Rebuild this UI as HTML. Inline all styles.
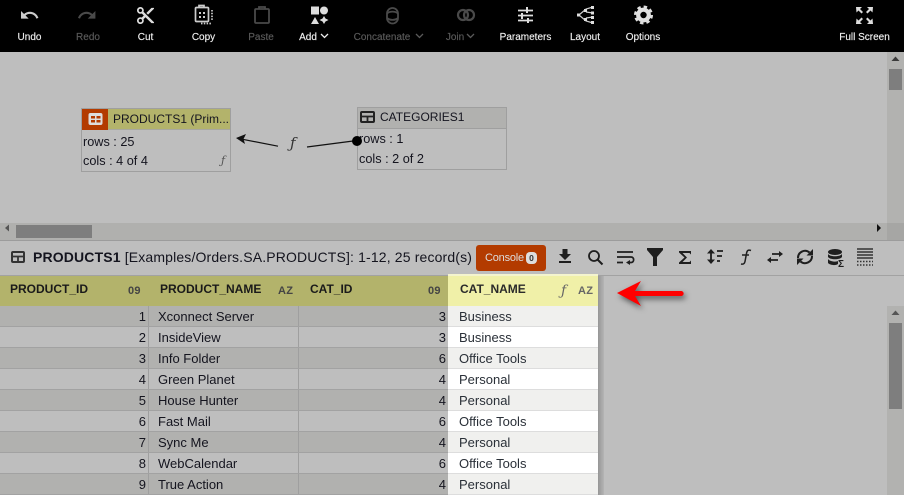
<!DOCTYPE html>
<html><head><meta charset="utf-8"><style>
html,body{margin:0;padding:0;width:904px;height:495px;overflow:hidden;background:#bebebe;font-family:"Liberation Sans",sans-serif;color:#1c1c1c}
div,span,svg{position:absolute;box-sizing:border-box;white-space:nowrap}
.tb{top:30.500px;height:13px;font-size:10px;line-height:13px;color:#eee;text-align:center;transform:translateX(-50%);-webkit-text-stroke:.15px #eee}
.dim{color:#5a5a5a;-webkit-text-stroke:.15px #5a5a5a}
.cell{height:20px;font-size:13px;line-height:20px;margin-top:1px;color:#14141e}
.num{text-align:right}
.hd{top:281px;font-size:12px;font-weight:bold;line-height:16px;color:#1a1a1a}
.ty{top:284px;font-size:11px;font-weight:bold;line-height:14px;color:#444;letter-spacing:.3px}
.n{font-size:12.7px;line-height:18px;color:#14141e}
.s{left:0;width:448px;height:20px;background:#b1b1af}
.w{left:448px;width:150px;height:20px;background:#fff}
.l{left:0;width:448px;height:1px;background:#a2a2a2}
.m{left:448px;width:150px;height:1px;background:#ddd}
.c{left:459px;color:#2a3038}
.a{left:0;width:146px}.b{left:158px}.d{left:299px;width:147px}
</style></head><body>
<div style="left:0;top:0;width:904px;height:52px;background:#000"></div>
<svg style="left:0;top:0" width="904" height="30" viewBox="0 0 904 30" fill="none">
<path transform="translate(19.300 5) scale(.85)" d="M12.500 8c-2.650 0-5.050.99-6.900 2.600L2 7v9h9l-3.620-3.620c1.390-1.160 3.160-1.880 5.120-1.880 3.540 0 6.550 2.310 7.600 5.500l2.370-.78C21.080 11.030 17.150 8 12.500 8z" fill="#ccc"/>
<path transform="translate(76.700 5) scale(.85)" d="M18.400 10.600C16.550 8.990 14.150 8 11.500 8c-4.650 0-8.580 3.030-9.960 7.220L3.900 16c1.050-3.190 4.050-5.500 7.600-5.500 1.950 0 3.730.72 5.120 1.880L13 16h9V7l-3.600 3.600z" fill="#4a4a4a"/>
<path transform="translate(135.300 5.300) scale(.85)" d="M9.640 7.640c.23-.5.36-1.050.36-1.640 0-2.210-1.790-4-4-4S2 3.790 2 6s1.790 4 4 4c.59 0 1.140-.13 1.640-.36L10 12l-2.360 2.360C7.140 14.130 6.590 14 6 14c-2.210 0-4 1.790-4 4s1.790 4 4 4 4-1.790 4-4c0-.59-.13-1.140-.36-1.640L12 14l7 7h3v-1L9.640 7.640zM6 8c-1.100 0-2-.89-2-2s.9-2 2-2 2 .89 2 2-.9 2-2 2zm0 12c-1.100 0-2-.89-2-2s.9-2 2-2 2 .89 2 2-.9 2-2 2zM19 3l-6 6 2 2 7-7V3z" fill="#ddd"/>
<g stroke="#ccc" stroke-width="1.700"><rect x="195.500" y="7.500" width="13" height="14" rx="1"/><path d="M199 7V5.500h5V7"/><path d="M212 10v11M201 23.500h11" stroke-dasharray="1.500 1.300"/></g><path d="M199 12h2v2h-2zM203 12h2v2h-2zM203 16h2v2h-2zM199 16h2v2h-2z" fill="#ccc"/>
<g stroke="#4a4a4a" stroke-width="1.800"><rect x="255" y="9" width="14" height="14" rx="1"/><path d="M259 9V7h6v2"/></g>
<path d="M311 6.500h8v8h-8z" fill="#ddd"/><circle cx="324" cy="10.500" r="4" fill="#ddd"/><path d="M315 17l4 7h-8zM324 16l1.500 2.500L328.500 20l-3 1.500L324 24l-1.500-2.500-3-1.500 3-1.500z" fill="#ddd"/>
<g stroke="#4a4a4a" stroke-width="1.800"><rect x="387" y="8" width="11" height="15.500" rx="5.500"/><path d="M387 13.500c3-2.500 8-2.500 11 0M387 18c3 2.500 8 2.500 11 0"/></g>
<g stroke="#4a4a4a" stroke-width="2.200"><circle cx="463" cy="15" r="5"/><circle cx="469" cy="15" r="5"/></g>
<g stroke="#ddd" stroke-width="1.700"><path d="M518 10.500h15M518 15.500h15M518 20.500h15"/></g><path d="M527 7v6M522 13v6M528 18v5" stroke="#ddd" stroke-width="2"/>
<g stroke="#ccc" stroke-width="1.200"><path d="M579 15l7-6 7-2M579 15l7 6 7 2M586 12l7 1M586 18l7-1"/></g><path d="M577 13.500h3v3h-3zM584 9h3v3h-3zM584 18h3v3h-3zM591 6h3v3h-3zM591 11.500h3v3h-3zM591 16h3v3h-3zM591 21h3v3h-3z" fill="#ddd"/>
<circle cx="643.500" cy="15" r="5.300" stroke="#e0e0e0" stroke-width="4.200"/><circle cx="643.500" cy="15" r="8.300" stroke="#e0e0e0" stroke-width="2.400" stroke-dasharray="3.500 3"/>
<path d="M856 7h6l-2 2 3 3-1.500 1.500-3-3-2 2zM873 7h-6l2 2-3 3 1.500 1.500 3-3 2 2zM856 24h6l-2-2 3-3-1.500-1.500-3 3-2-2zM873 24h-6l2-2-3-3 1.500-1.500 3 3 2-2z" fill="#ddd"/>
</svg>
<div class="tb" style="left:29.500px">Undo</div><div class="tb dim" style="left:88px">Redo</div><div class="tb" style="left:145.500px">Cut</div><div class="tb" style="left:203.500px">Copy</div><div class="tb dim" style="left:261px">Paste</div><div class="tb" style="left:308px">Add</div>
<div class="tb dim" style="left:382px">Concatenate</div><div class="tb dim" style="left:455px">Join</div><div class="tb" style="left:525.500px">Parameters</div><div class="tb" style="left:585px">Layout</div><div class="tb" style="left:643px">Options</div><div class="tb" style="left:864.500px">Full Screen</div>
<svg style="left:0;top:30px" width="904" height="13" fill="none"><path d="M321 4l3.500 3.500L328 4" stroke="#eee" stroke-width="1.300"/><path d="M416 4l3.500 3.500L423 4M467 4l3.500 3.500L474 4" stroke="#5a5a5a" stroke-width="1.300"/></svg>

<!-- scrollbars of canvas -->
<div style="left:887px;top:52px;width:17px;height:171px;background:#b2b2b0"></div>
<div style="left:889px;top:69px;width:13px;height:21px;background:#7e7e7e"></div>
<div style="left:0;top:223px;width:904px;height:17px;background:#b0b0ae"></div>
<div style="left:887px;top:223px;width:17px;height:17px;background:#a6a6a4"></div>
<div style="left:16px;top:225px;width:76px;height:13px;background:#7e7e7e"></div>
<svg style="left:0;top:52px" width="904" height="190" fill="none"><path d="M891.500 9l4-4.500 4 4.500z" fill="#3a3a3a"/><path d="M5 176l4-3.500v7z" fill="#555"/><path d="M877 172v8l4-4z" fill="#111"/></svg>
<div style="left:0;top:240px;width:904px;height:1px;background:#9c9c9c"></div>

<!-- nodes -->
<div style="left:81px;top:108px;width:150px;height:64px;border:1px solid #9f9f9f;background:#bebebe"></div>
<div style="left:82px;top:109px;width:148px;height:21px;background:#b3b36b;border-bottom:1px solid #a8a8a0"></div>
<div style="left:82px;top:109px;width:26px;height:21px;background:#b33b00"></div>
<svg style="left:88px;top:112px" width="15" height="14"><rect x=".5" y="1" width="14" height="12" rx="2" fill="#ddd"/><path d="M3 4h4v2.500H3zM8.500 4h4v2.500h-4zM3 8h4v2.500H3zM8.500 8h4v2.500h-4z" fill="#b33b00"/></svg>
<div style="left:113px;top:111px;font-size:12px;line-height:17px;color:#14141e;width:116px">PRODUCTS1 (Prim...</div>
<div class="n" style="left:83px;top:133px">rows : 25</div>
<div class="n" style="left:83px;top:152px">cols : 4 of 4</div>
<div style="left:221px;top:153px;font:italic 11px/15px 'DejaVu Serif',serif;color:#555">ƒ</div>

<div style="left:357px;top:107px;width:150px;height:63px;border:1px solid #9f9f9f"></div>
<div style="left:358px;top:108px;width:148px;height:21px;background:#b1b1af;border-bottom:1px solid #9f9f9f"></div>
<svg style="left:360px;top:111px" width="15" height="13"><rect x="1" y="1" width="13" height="10" rx="1" stroke="#222" stroke-width="2" fill="none"/><path d="M1 5.500h13M7.500 5v6" stroke="#222" stroke-width="1.800"/></svg>
<div style="left:380px;top:109px;font-size:12px;line-height:17px;color:#14141e">CATEGORIES1</div>
<div class="n" style="left:359px;top:130px">rows : 1</div>
<div class="n" style="left:359px;top:150px">cols : 2 of 2</div>
<svg style="left:230px;top:125px" width="135" height="30" fill="none"><path d="M12 14.200l36 7" stroke="#111" stroke-width="1.200"/><path d="M6 13l10-4-2.500 5 1.500 5z" fill="#111"/><path d="M77 22l50-6.500" stroke="#111" stroke-width="1.200"/><circle cx="127" cy="16" r="5" fill="#000"/></svg>
<div style="left:290px;top:133px;font:italic 15px/20px 'DejaVu Serif',serif;color:#333">ƒ</div>

<!-- title row -->
<svg style="left:10px;top:250px" width="16" height="14"><rect x="2" y="2" width="12" height="10" rx="1" stroke="#333" stroke-width="2" fill="none"/><path d="M2 6.500h12M8 6v6" stroke="#333" stroke-width="1.800"/></svg>
<div style="left:33px;top:248px;font-size:14px;line-height:18px;color:#14141e;letter-spacing:.15px"><b>PRODUCTS1</b> [Examples/Orders.SA.PRODUCTS]: 1-12, 25 record(s)</div>
<div style="left:476px;top:245px;width:70px;height:26px;background:#b33b00;border-radius:3px"></div>
<div style="left:485px;top:251px;font-size:11px;line-height:15px;color:#ddd;letter-spacing:-.2px">Console</div>
<div style="left:526px;top:252px;width:11px;height:12px;border-radius:4px;background:#ddd;color:#333;font-size:8.500px;font-weight:bold;line-height:12px;text-align:center">0</div>
<svg style="left:550px;top:243px" width="330" height="30" fill="none">
<path d="M12.500 6h5v5h3.500l-6 6-6-6h3.500zM9 18h12v2H9z" fill="#1e1e1e"/>
<circle cx="44" cy="13" r="5" stroke="#1e1e1e" stroke-width="1.800"/><path d="M47.500 16.500l5 5" stroke="#1e1e1e" stroke-width="2"/>
<path d="M67 9h16M67 14h14c3.500 0 3.500 5.500 0 5.500h-3M67 19.500h6" stroke="#1e1e1e" stroke-width="1.700"/><path d="M80 17l-4 2.500 4 2.500z" fill="#1e1e1e"/>
<path d="M97 5h16v2l-6 7v9h-4v-9l-6-7z" fill="#1e1e1e"/>
<path d="M129 8h12v3.500L139.500 10h-7l4.500 4.500-4.500 4.500h7l1.500-1.500V21h-12v-1.500l5.500-5-5.500-5z" fill="#1e1e1e"/>
<path d="M161 9v9" stroke="#1e1e1e" stroke-width="1.800"/><path d="M161 6l-4 4.500h8zM161 21l-4-4.500h8z" fill="#1e1e1e"/><path d="M167 8h6M167 13h5M167 18h3" stroke="#1e1e1e" stroke-width="1.800"/>
<path d="M201 7.500c-3-1-4 0-4.500 3l-1.500 8c-.5 2.500-2 3-4 2.500M192 12h7" stroke="#1e1e1e" stroke-width="1.500"/>
<path d="M222 11h8M220 17h8" stroke="#1e1e1e" stroke-width="1.800"/><path d="M233 11l-4-3v6zM217 17l4-3v6z" fill="#1e1e1e"/>
<path d="M248 15a7 7 0 0 1 11.500-5.500M262 13a7 7 0 0 1-11.500 5.500" stroke="#1e1e1e" stroke-width="2"/><path d="M263 6v6.500h-6.500zM247 22v-6.500h6.500z" fill="#1e1e1e"/>
<ellipse cx="285" cy="9" rx="7" ry="3" fill="#1e1e1e"/><path d="M278 11c2 3 12 3 14 0v3c-2 3-12 3-14 0zM278 16c2 3 9 3 10 2v3c-3 2-8 1-10-1z" fill="#1e1e1e"/><text x="288" y="24" font-size="10" font-weight="bold" fill="#1e1e1e" font-family="Liberation Sans">Σ</text>
<path d="M307 6h16M307 9h16M307 12h16M307 15h16" stroke="#333" stroke-width="1.400"/><path d="M307 18.500h16M307 22h16" stroke="#333" stroke-width="1.400" stroke-dasharray="1.500 1.500"/>
</svg>
<div style="left:0;top:275px;width:904px;height:1px;background:#a2a2a2"></div>

<!-- table header -->
<div style="left:0;top:276px;width:448px;height:30px;background:#b3b36b"></div>
<div class="hd" style="left:10px">PRODUCT_ID</div><div class="ty" style="left:128px">09</div>
<div class="hd" style="left:160px">PRODUCT_NAME</div><div class="ty" style="left:278px">AZ</div>
<div class="hd" style="left:310px">CAT_ID</div><div class="ty" style="left:428px">09</div>

<!-- rows -->
<div class="s" style="top:306px"></div><div class="s" style="top:348px"></div><div class="s" style="top:390px"></div><div class="s" style="top:432px"></div><div class="s" style="top:474px"></div>
<div style="left:148px;top:306px;width:1px;height:189px;background:#9f9f9f"></div>
<div style="left:298px;top:306px;width:1px;height:189px;background:#9f9f9f"></div>
<div class="l" style="top:326px"></div><div class="l" style="top:347px"></div><div class="l" style="top:368px"></div><div class="l" style="top:389px"></div><div class="l" style="top:410px"></div><div class="l" style="top:431px"></div><div class="l" style="top:452px"></div><div class="l" style="top:473px"></div><div class="l" style="top:494px"></div>

<!-- selected column -->
<div style="left:598px;top:276px;width:6px;height:219px;background:linear-gradient(90deg,#969696,#b4b4b4)"></div>
<div style="left:448px;top:274px;width:150px;height:32px;background:#f0f0a8;border-top:2px solid #f4f4ce"></div>
<div style="left:448px;top:306px;width:150px;height:189px;background:#f0f0ee"></div>
<div class="w" style="top:327px"></div><div class="w" style="top:369px"></div><div class="w" style="top:411px"></div><div class="w" style="top:453px"></div>
<div class="m" style="top:326px"></div><div class="m" style="top:347px"></div><div class="m" style="top:368px"></div><div class="m" style="top:389px"></div><div class="m" style="top:410px"></div><div class="m" style="top:431px"></div><div class="m" style="top:452px"></div><div class="m" style="top:473px"></div><div class="m" style="top:494px"></div>
<div class="hd" style="left:460px;color:#2a2a2a">CAT_NAME</div>
<div style="left:561px;top:282px;font:italic 14px/18px 'DejaVu Serif',serif;color:#666">ƒ</div>
<div class="ty" style="left:578px;color:#666">AZ</div>

<!-- data -->
<div class="cell num a" style="top:306px">1</div><div class="cell b" style="top:306px">Xconnect Server</div><div class="cell num d" style="top:306px">3</div><div class="cell c" style="top:306px">Business</div>
<div class="cell num a" style="top:327px">2</div><div class="cell b" style="top:327px">InsideView</div><div class="cell num d" style="top:327px">3</div><div class="cell c" style="top:327px">Business</div>
<div class="cell num a" style="top:348px">3</div><div class="cell b" style="top:348px">Info Folder</div><div class="cell num d" style="top:348px">6</div><div class="cell c" style="top:348px">Office Tools</div>
<div class="cell num a" style="top:369px">4</div><div class="cell b" style="top:369px">Green Planet</div><div class="cell num d" style="top:369px">4</div><div class="cell c" style="top:369px">Personal</div>
<div class="cell num a" style="top:390px">5</div><div class="cell b" style="top:390px">House Hunter</div><div class="cell num d" style="top:390px">4</div><div class="cell c" style="top:390px">Personal</div>
<div class="cell num a" style="top:411px">6</div><div class="cell b" style="top:411px">Fast Mail</div><div class="cell num d" style="top:411px">6</div><div class="cell c" style="top:411px">Office Tools</div>
<div class="cell num a" style="top:432px">7</div><div class="cell b" style="top:432px">Sync Me</div><div class="cell num d" style="top:432px">4</div><div class="cell c" style="top:432px">Personal</div>
<div class="cell num a" style="top:453px">8</div><div class="cell b" style="top:453px">WebCalendar</div><div class="cell num d" style="top:453px">6</div><div class="cell c" style="top:453px">Office Tools</div>
<div class="cell num a" style="top:474px">9</div><div class="cell b" style="top:474px">True Action</div><div class="cell num d" style="top:474px">4</div><div class="cell c" style="top:474px">Personal</div>

<!-- right scrollbar -->
<div style="left:887px;top:306px;width:17px;height:189px;background:#b2b2b0"></div>
<div style="left:889px;top:323px;width:13px;height:86px;background:#7e7e7e"></div>
<svg style="left:887px;top:306px" width="17" height="17"><path d="M4.500 9l4-4.500 4 4.500z" fill="#555"/></svg>

<!-- arrow -->
<svg style="left:610px;top:276px;filter:drop-shadow(2px 3px 3px #555)" width="82" height="38" fill="none">
<path d="M7 17L31 5l-6 10h46c3.500 0 3.500 5 0 5H25l6 10z" fill="#f00"/>
</svg>
</body></html>
